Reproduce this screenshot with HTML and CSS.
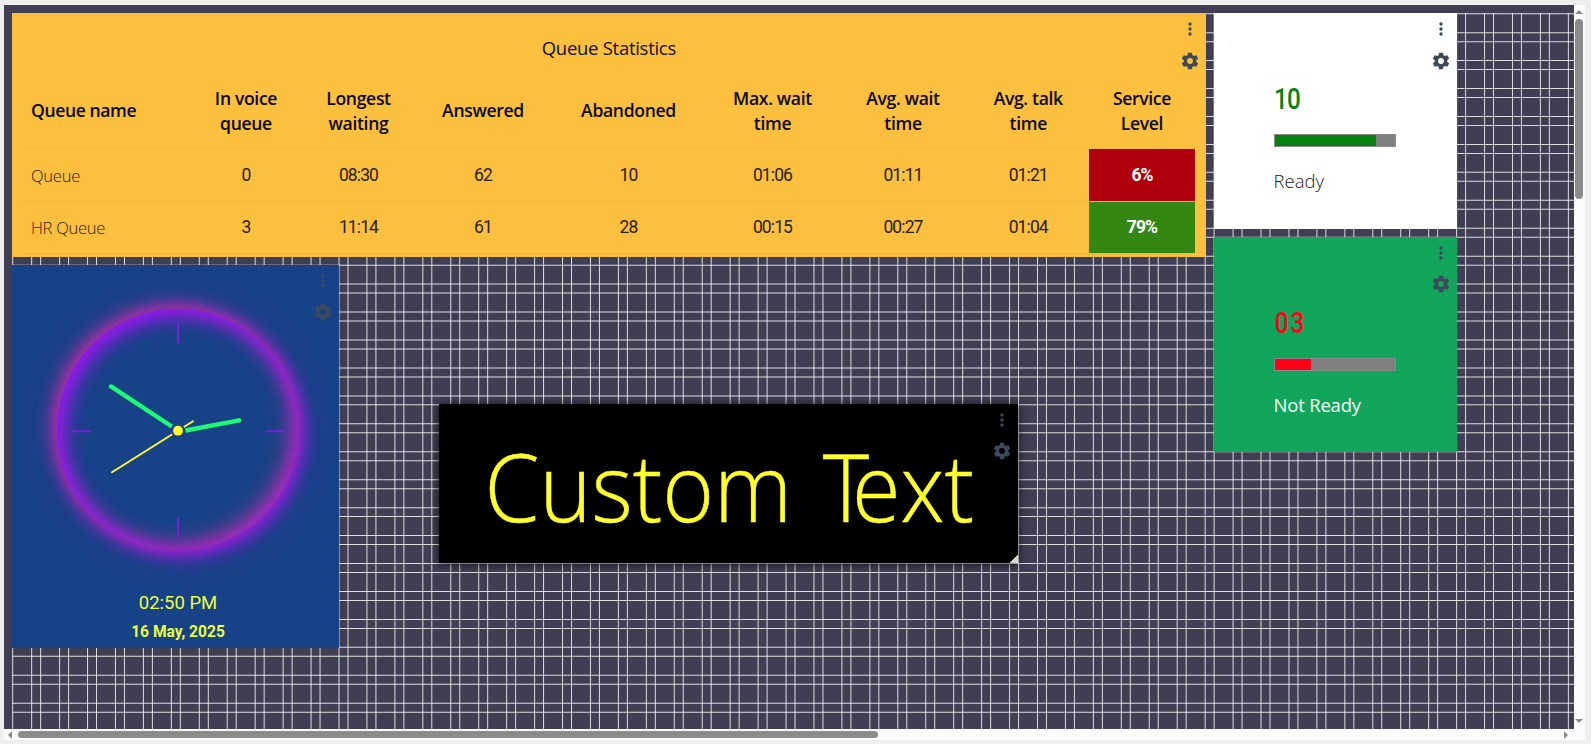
FILE: index.html
```
<!DOCTYPE html>
<html lang="en">
<head>
<meta charset="utf-8">
<title>Dashboard</title>
<link rel="stylesheet" href="styles.css">
</head>
<body>
<svg class="defs" aria-hidden="true">
  <symbol id="dots" viewBox="0 0 24 24"><circle cx="12" cy="6" r="2"/><circle cx="12" cy="12" r="2"/><circle cx="12" cy="18" r="2"/></symbol>
  <symbol id="cog" viewBox="0 0 24 24"><path d="M12,15.5A3.5,3.5 0 0,1 8.5,12A3.5,3.5 0 0,1 12,8.5A3.5,3.5 0 0,1 15.5,12A3.5,3.5 0 0,1 12,15.5M19.43,12.97C19.47,12.65 19.5,12.33 19.5,12C19.5,11.67 19.47,11.34 19.43,11L21.54,9.37C21.73,9.22 21.78,8.95 21.66,8.73L19.66,5.27C19.54,5.05 19.27,4.96 19.05,5.05L16.56,6.05C16.04,5.66 15.5,5.32 14.87,5.07L14.5,2.42C14.46,2.18 14.25,2 14,2H10C9.75,2 9.54,2.18 9.5,2.42L9.13,5.07C8.5,5.32 7.96,5.66 7.44,6.05L4.95,5.05C4.73,4.96 4.46,5.05 4.34,5.27L2.34,8.73C2.21,8.95 2.27,9.22 2.46,9.37L4.57,11C4.53,11.34 4.5,11.67 4.5,12C4.5,12.33 4.53,12.65 4.57,12.97L2.46,14.63C2.27,14.78 2.21,15.05 2.34,15.27L4.34,18.73C4.46,18.95 4.73,19.03 4.95,18.95L7.44,17.94C7.96,18.34 8.5,18.68 9.13,18.93L9.5,21.58C9.54,21.82 9.75,22 10,22H14C14.25,22 14.46,21.82 14.5,21.58L14.87,18.93C15.5,18.67 16.04,18.34 16.56,17.94L19.05,18.95C19.27,19.03 19.54,18.95 19.66,18.73L21.66,15.27C21.78,15.05 21.73,14.78 21.54,14.63L19.43,12.97Z"/></symbol>
</svg>
<div class="viewport">
  <main class="canvas">
    <svg class="lines" width="1562" height="716">
      <path class="line-x" d="M0.2 358H1562"/>
      <path class="line-y" d="M781 0.2V716"/>
    </svg>

    <section class="widget queue">
      <div class="tools"><svg><use href="#dots"/></svg><svg><use href="#cog"/></svg></div>
      <h2 class="queue-title"><span>Queue Statistics</span></h2>
      <table class="stats">
        <colgroup><col class="c1"><col class="c2"><col class="c3"><col class="c4"><col class="c5"><col class="c6"><col class="c7"><col class="c8"><col class="c9"></colgroup>
        <thead>
          <tr><th>Queue name</th><th>In voice<br>queue</th><th>Longest<br>waiting</th><th>Answered</th><th>Abandoned</th><th>Max. wait<br>time</th><th>Avg. wait<br>time</th><th>Avg. talk<br>time</th><th>Service<br>Level</th></tr>
        </thead>
        <tbody>
          <tr><td>Queue</td><td>0</td><td>08:30</td><td>62</td><td>10</td><td>01:06</td><td>01:11</td><td>01:21</td><td class="level bad">6%</td></tr>
          <tr><td>HR Queue</td><td>3</td><td>11:14</td><td>61</td><td>28</td><td>00:15</td><td>00:27</td><td>01:04</td><td class="level good">79%</td></tr>
        </tbody>
      </table>
    </section>

    <section class="widget agent ready">
      <div class="tools"><svg><use href="#dots"/></svg><svg><use href="#cog"/></svg></div>
      <div class="count">10</div>
      <div class="bar"><div class="fill"></div></div>
      <div class="state">Ready</div>
    </section>

    <section class="widget agent not-ready">
      <div class="tools"><svg><use href="#dots"/></svg><svg><use href="#cog"/></svg></div>
      <div class="count">03</div>
      <div class="bar"><div class="fill"></div></div>
      <div class="state">Not Ready</div>
    </section>

    <section class="widget clock">
      <div class="tools"><svg><use href="#dots"/></svg><svg><use href="#cog"/></svg></div>
      <div class="dial">
        <svg class="hands" viewBox="-121 -121 242 242">
          <path class="tick" d="M0-107v19.6M0 86.500v19.600M-106.700.5h19.600M87 .5h19.600"/>
          <path class="hand" d="M7.500-.2L61.200-10.400M-6.200-4.200L-67-44.300"/>
          <circle class="tip" cx="61.200" cy="-10.400" r="2.200"/>
          <circle class="tip" cx="-67" cy="-44.300" r="2.200"/>
          <path class="second" d="M-66 41.500L15-9.500"/>
          <circle class="ring" r="7"/>
          <circle class="hub" r="4.900"/>
        </svg>
      </div>
      <div class="time">02:50 PM</div>
      <div class="date">16 May, 2025</div>
    </section>

    <section class="widget custom">
      <div class="tools"><svg><use href="#dots"/></svg><svg><use href="#cog"/></svg></div>
      <div class="custom-text">Custom <span class="kern">T</span>ext</div>
      <i class="resize"></i>
    </section>
  </main>
  <div class="vbar"><i class="up"></i><b></b><i class="down"></i></div>
  <div class="hbar"><i class="left"></i><b></b><i class="right"></i></div>
  <div class="corner"></div>
</div>
</body>
</html>
```
FILE: styles.css
```
* { box-sizing: border-box; }
body {
  margin: 0;
  height: 744px;
  padding: 5px 6px 4px 4px;
  background: #eee;
  font-family: "Open Sans", "Noto Sans", sans-serif;
  overflow: hidden;
}
.defs { position: absolute; width: 0; height: 0; }
.viewport {
  display: grid;
  grid-template: 724px 11px / 1570px 11px;
}
.canvas {
  position: relative;
  overflow: hidden;
  background: #3f3e53;
  padding: 8.200px 0 0 8.200px;
  display: grid;
  grid-template-columns: repeat(56, 19.970px);
  grid-auto-rows: 19.970px;
  gap: 7.970px;
}
.lines { position: absolute; left: 8px; top: 8px; }
.line-x, .line-y { stroke: #fff; stroke-opacity: .82; stroke-dasharray: 1 17.96 1 7.98; }
.line-x { stroke-width: 716; }
.line-y { stroke-width: 1562; }

.widget { position: relative; }
.tools {
  position: absolute;
  top: 6px;
  right: 6px;
  display: flex;
  flex-direction: column;
  gap: 11.500px;
  color: #3d4957;
}
.tools svg { width: 20px; height: 20px; fill: currentColor; display: block; }

.queue { grid-area: 1 / 1 / span 9 / span 43; background: #fcc03e; }
.queue .tools { right: 6px; }
.queue-title {
  margin: 0;
  padding-top: 22px;
  height: 60.300px;
  text-align: center;
  font-size: 18.500px;
  font-weight: 400;
  line-height: 26px;
  letter-spacing: -.28px;
  color: #111;
}
.stats {
  margin-left: 10.300px;
  width: 1172.500px;
  table-layout: fixed;
  border-collapse: separate;
  border-spacing: 0;
}
.c1 { width: 168px; } .c2 { width: 111px; } .c3 { width: 114px; }
.c4 { width: 135px; } .c5 { width: 156px; } .c6 { width: 132px; }
.c7 { width: 129px; } .c8 { width: 121.500px; } .c9 { width: 106px; }
.stats th, .stats td { padding: 0; text-align: center; border-bottom: 1px solid #f2b83d; }
.stats th {
  height: 76px;
  font-size: 17.600px;
  font-weight: 600;
  line-height: 25px;
  letter-spacing: -.35px;
  color: #0b0a06;
}
.stats td {
  height: 52.300px;
  font-family: Roboto, sans-serif;
  font-size: 17.500px;
  letter-spacing: -.9px;
  color: #2a2110;
}
.stats th:first-child, .stats td:first-child { text-align: left; padding-left: 8.500px; }
.stats th:first-child { letter-spacing: -.42px; }
.stats td:first-child {
  font-family: "Open Sans", sans-serif;
  font-weight: 300;
  font-size: 16.500px;
  letter-spacing: -.25px;
}
.stats td.level { color: #fff; font-weight: 700; }
.bad { background: #b0000c; }
.good { background: #348713; }

.agent { padding: 68px 0 0 60px; }
.ready { grid-area: 1 / 44 / span 8 / span 9; background: #fff; }
.not-ready { grid-area: 9 / 44 / span 8 / span 9; background: #12a65c; }
.count {
  font: 500 29.500px/36px Roboto, sans-serif;
  letter-spacing: -1px;
  transform: scaleX(.82);
  transform-origin: 0 50%;
}
.bar { margin-top: 17px; width: 122.500px; height: 13px; background: #808080; border: 1px solid #8a8a8a; }
.fill { height: 100%; }
.state { margin-top: 21px; font-size: 18.500px; line-height: 26px; font-weight: 300; }
.ready .count { color: #07810f; }
.ready .fill { width: 101px; background: #07810f; }
.ready .state { color: #222; }
.not-ready .count { color: #f90519; letter-spacing: 2.500px; padding-left: 1px; }
.not-ready .fill { width: 36px; background: #ff0018; }
.not-ready .state { color: #f2fff6; font-weight: 400; letter-spacing: -.2px; }
.not-ready .tools { color: #42485b; }

.clock {
  grid-area: 10 / 1 / span 14 / span 12;
  background: #184287;
  padding: 44.800px 0 0 44.800px;
}
.clock .tools { color: #3f4a59; right: 6.500px; }
.dial {
  width: 242px;
  height: 242px;
  border-radius: 50%;
  box-shadow:
    -4px -4px 18px rgba(200, 50, 160, .9),
    4px 4px 18px rgba(150, 20, 245, 1),
    0 0 36px 2px rgba(110, 50, 180, .35),
    inset 5px 5px 20px 2px rgba(155, 20, 250, 1),
    inset -5px -5px 20px 2px rgba(195, 50, 165, .9);
}
.hands { display: block; width: 242px; height: 242px; overflow: visible; transform: translateY(.7px); }
.tick { stroke: #7820d8; stroke-width: 2; }
.hand { stroke: #1dfa76; stroke-width: 4.400; }
.tip { fill: #1dfa76; }
.second { stroke: #ffff2e; stroke-width: 1.900; stroke-linecap: round; }
.ring { fill: #184287; }
.hub { fill: #ffff2e; }
.time, .date { width: 242px; text-align: center; color: #e8ff3c; font-family: Roboto, sans-serif; }
.time { margin-top: 37.700px; font-size: 18.500px; line-height: 28px; }
.date { font-size: 17.300px; line-height: 28px; font-weight: 700; transform: scaleX(.9); }

.custom {
  grid-area: 15 / 16 / span 6 / span 21;
  left: 8px;
  top: -.7px;
  background: #000;
  box-shadow: 0 1px 8px rgba(0, 0, 0, .75);
}
.custom .tools { color: #3d4a5c; }
.custom-text {
  padding-left: 48.500px;
  padding-top: 17.500px;
  font-size: 94px;
  line-height: 130px;
  font-weight: 300;
  color: #ffff2e;
  -webkit-text-stroke: .5px #ffff2e;
  white-space: nowrap;
  word-spacing: 8px;
  transform: scaleX(.94);
  transform-origin: 0 50%;
}
.kern { letter-spacing: -18px; }
.resize {
  position: absolute;
  right: 0;
  bottom: 0;
  width: 8px;
  height: 8px;
  background: linear-gradient(135deg, transparent 50%, #d8d8d0 50%);
}

.vbar, .hbar, .corner { background: #fcfcfc; }
.vbar { display: flex; flex-direction: column; align-items: center; padding: 5px 1px 6px 0; }
.vbar b { width: 8px; height: 180px; margin-top: 5px; border-radius: 4px; background: #8b8b8b; }
.vbar i, .hbar i { border: 4px solid transparent; }
.vbar .up { border-top: 0; border-bottom-color: #8b8b8b; }
.vbar .down { border-bottom: 0; border-top-color: #8b8b8b; margin-top: auto; }
.hbar { display: flex; align-items: center; padding: 0 6px 0 4px; }
.hbar b { width: 860px; height: 7px; margin-left: 6px; border-radius: 4px; background: #8b8b8b; }
.hbar .left { border-left: 0; border-right-color: #8b8b8b; }
.hbar .right { border-right: 0; border-left-color: #8b8b8b; margin-left: auto; }
```
